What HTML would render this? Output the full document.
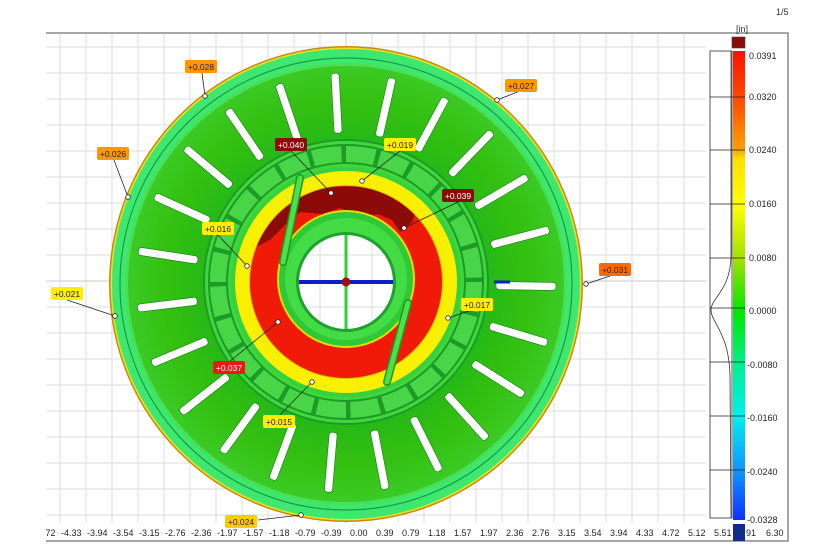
<!DOCTYPE html>
<html><head><meta charset="utf-8"><style>
html,body{margin:0;padding:0;background:#fff;width:828px;height:552px;overflow:hidden}
svg{display:block;font-family:"Liberation Sans",sans-serif}
</style></head><body>
<svg width="828" height="552" viewBox="0 0 828 552" xmlns="http://www.w3.org/2000/svg">
<defs>
<clipPath id="hole"><circle cx="346" cy="282" r="47"/></clipPath>
<clipPath id="redc"><path d="M346,186 a96,96 0 1,1 -0.1,0 Z M346,213 a68,68 0 1,0 0.1,0 Z" clip-rule="evenodd"/></clipPath>
<clipPath id="axl"><rect x="46" y="525" width="742" height="16"/></clipPath>
<linearGradient id="cb" x1="0" y1="0" x2="0" y2="1">
<stop offset="0" stop-color="#ff1000"/><stop offset="0.1" stop-color="#ff4a00"/>
<stop offset="0.21" stop-color="#ffa000"/><stop offset="0.23" stop-color="#ffe000"/>
<stop offset="0.33" stop-color="#ffff00"/><stop offset="0.45" stop-color="#99e000"/>
<stop offset="0.555" stop-color="#00e800"/><stop offset="0.67" stop-color="#00f090"/>
<stop offset="0.78" stop-color="#00f0f0"/><stop offset="0.9" stop-color="#1090ff"/>
<stop offset="1" stop-color="#1030ff"/></linearGradient>
<radialGradient id="spk" cx="346" cy="283" r="222" gradientUnits="userSpaceOnUse">
<stop offset="0.6" stop-color="#22b818"/><stop offset="0.82" stop-color="#34c010"/><stop offset="1" stop-color="#3ccc28"/></radialGradient>
<g id="grid" stroke="#dcdcdc" stroke-width="1">
<path d="M60,33V523M86,33V523M112,33V523M138,33V523M164,33V523M190,33V523M216,33V523M242,33V523M268,33V523M294,33V523M320,33V523M372,33V523M398,33V523M424,33V523M450,33V523M476,33V523M502,33V523M528,33V523M554,33V523M580,33V523M606,33V523M632,33V523M658,33V523M684,33V523"/>
<path d="M46,47H706M46,73H706M46,99H706M46,125H706M46,151H706M46,177H706M46,203H706M46,229H706M46,255H706M46,307H706M46,333H706M46,359H706M46,385H706M46,411H706M46,437H706M46,463H706M46,489H706M46,515H706"/>
<path d="M346,33V523M46,281H706" stroke="#c8c8c8"/>
</g>
</defs>
<use href="#grid"/>
<path d="M46,33H788V541H46" fill="none" stroke="#8a8a8a" stroke-width="1.5"/>
<text x="776" y="15" font-size="9" fill="#333">1/5</text>
<text x="736" y="32" font-size="9" fill="#333">[in]</text>
<!-- outer disc -->
<ellipse cx="346" cy="284" rx="237" ry="238" fill="#c88a10"/>
<ellipse cx="346" cy="284" rx="235.5" ry="236.5" fill="#e8e020"/>
<ellipse cx="346" cy="284" rx="234" ry="235" fill="#3ee870"/>
<circle cx="346" cy="284" r="226" fill="none" stroke="#1a9a40" stroke-width="1.2"/>
<circle cx="346" cy="284" r="221" fill="#48e058"/>
<circle cx="346" cy="284" r="218" fill="url(#spk)"/>
<g transform="translate(346,283)" fill="#fff" stroke="#167a10" stroke-width="0.6">
<rect x="150" y="-4" width="60" height="8" rx="3" transform="rotate(-93)"/>
<rect x="150" y="-4" width="60" height="8" rx="3" transform="rotate(-108.65)"/>
<rect x="150" y="-4" width="60" height="8" rx="3" transform="rotate(-124.3)"/>
<rect x="150" y="-4" width="60" height="8" rx="3" transform="rotate(-139.95)"/>
<rect x="150" y="-4" width="60" height="8" rx="3" transform="rotate(-155.6)"/>
<rect x="150" y="-4" width="60" height="8" rx="3" transform="rotate(-171.25)"/>
<rect x="150" y="-4" width="60" height="8" rx="3" transform="rotate(-186.9)"/>
<rect x="150" y="-4" width="60" height="8" rx="3" transform="rotate(-202.55)"/>
<rect x="150" y="-4" width="60" height="8" rx="3" transform="rotate(-218.2)"/>
<rect x="150" y="-4" width="60" height="8" rx="3" transform="rotate(-233.85)"/>
<rect x="150" y="-4" width="60" height="8" rx="3" transform="rotate(-249.5)"/>
<rect x="150" y="-4" width="60" height="8" rx="3" transform="rotate(-265.15)"/>
<rect x="150" y="-4" width="60" height="8" rx="3" transform="rotate(-280.8)"/>
<rect x="150" y="-4" width="60" height="8" rx="3" transform="rotate(-296.45)"/>
<rect x="150" y="-4" width="60" height="8" rx="3" transform="rotate(-312.1)"/>
<rect x="150" y="-4" width="60" height="8" rx="3" transform="rotate(-327.75)"/>
<rect x="150" y="-4" width="60" height="8" rx="3" transform="rotate(-343.4)"/>
<rect x="150" y="-4" width="60" height="8" rx="3" transform="rotate(-359.05)"/>
<rect x="150" y="-4" width="60" height="8" rx="3" transform="rotate(-14.7)"/>
<rect x="150" y="-4" width="60" height="8" rx="3" transform="rotate(-30.35)"/>
<rect x="150" y="-4" width="60" height="8" rx="3" transform="rotate(-46)"/>
<rect x="150" y="-4" width="60" height="8" rx="3" transform="rotate(-61.65)"/>
<rect x="150" y="-4" width="60" height="8" rx="3" transform="rotate(-77.3)"/>
</g>
<!-- hub -->
<circle cx="346" cy="282" r="143" fill="#1f9a28"/>
<circle cx="346" cy="282" r="141" fill="#3fd83a"/>
<circle cx="346" cy="282" r="128" fill="none" stroke="#1e9a26" stroke-width="20"/>
<circle cx="346" cy="282" r="128" fill="none" stroke="#48d648" stroke-width="16" stroke-dasharray="29 4.5"/>
<circle cx="346" cy="282" r="115" fill="#36d040"/>
<circle cx="346" cy="282" r="111" fill="#f8f000"/>
<circle cx="346" cy="282" r="97" fill="#d8c000"/>
<circle cx="346" cy="282" r="96" fill="#f01a08"/>
<g clip-path="url(#redc)">
<path d="M250,200 L300,187 L380,186 L420,200 L412,222 L400,232 L392,220 L378,214 L360,218 L340,208 L322,214 L300,212 L285,225 L270,240 L250,250 Z" fill="#8c0a08"/>
</g>
<circle cx="346" cy="279" r="69" fill="#e0e000"/>
<circle cx="346" cy="279" r="67" fill="#2ec838"/>
<circle cx="346" cy="279" r="61" fill="#44dc44"/>
<circle cx="346" cy="282" r="50" fill="#1fa030"/>
<circle cx="346" cy="282" r="47" fill="#fff"/>
<g clip-path="url(#hole)"><use href="#grid"/></g>
<path d="M300,178 L283,262 M408,303 L387,382" stroke="#1c9a20" stroke-width="8" stroke-linecap="round"/>
<path d="M300,178 L283,262 M408,303 L387,382" stroke="#4ee04a" stroke-width="5" stroke-linecap="round"/>
<path d="M346,235V329" stroke="#30d030" stroke-width="3"/>
<path d="M299,282H393" stroke="#0a20c8" stroke-width="4"/>
<circle cx="346" cy="282" r="4.5" fill="#a01010"/>
<path d="M494,282H510" stroke="#0a20c8" stroke-width="3"/>
<!-- labels -->
<g stroke="#222" stroke-width="0.8" fill="none">
<path d="M202,73L205,96M520,91L497,100M114,160L128,197M291,151L331,193M400,151L362,181M458,202L404,228M218,235L247,266M610,276L586,284M67,300L115,316M472,310L448,318M229,362L278,322M279,416L312,382M258,520L301,515"/>
</g>
<g fill="#fff" stroke="#222" stroke-width="0.8">
<circle cx="205" cy="96" r="2.3"/><circle cx="497" cy="100" r="2.3"/><circle cx="128" cy="197" r="2.3"/>
<circle cx="331" cy="193" r="2.3"/><circle cx="362" cy="181" r="2.3"/><circle cx="404" cy="228" r="2.3"/>
<circle cx="247" cy="266" r="2.3"/><circle cx="586" cy="284" r="2.3"/><circle cx="115" cy="316" r="2.3"/>
<circle cx="448" cy="318" r="2.3"/><circle cx="278" cy="322" r="2.3"/><circle cx="312" cy="382" r="2.3"/>
<circle cx="301" cy="515" r="2.3"/>
</g>
<g font-size="8.5" text-anchor="middle">
<rect x="185" y="60" width="32" height="13" rx="2" fill="#ff9800"/><text x="201" y="70" fill="#222">+0.028</text>
<rect x="505" y="79" width="32" height="13" rx="2" fill="#ff9800"/><text x="521" y="89" fill="#222">+0.027</text>
<rect x="97" y="147" width="32" height="13" rx="2" fill="#ff9800"/><text x="113" y="157" fill="#222">+0.026</text>
<rect x="275" y="138" width="32" height="13" rx="2" fill="#8c0a08"/><text x="291" y="148" fill="#fff">+0.040</text>
<rect x="384" y="138" width="32" height="13" rx="2" fill="#ffee00"/><text x="400" y="148" fill="#222">+0.019</text>
<rect x="442" y="189" width="32" height="13" rx="2" fill="#8c0a08"/><text x="458" y="199" fill="#fff">+0.039</text>
<rect x="202" y="222" width="32" height="13" rx="2" fill="#ffee00"/><text x="218" y="232" fill="#222">+0.016</text>
<rect x="599" y="263" width="32" height="13" rx="2" fill="#ff6a00"/><text x="615" y="273" fill="#222">+0.031</text>
<rect x="51" y="287" width="32" height="13" rx="2" fill="#ffee00"/><text x="67" y="297" fill="#222">+0.021</text>
<rect x="461" y="298" width="32" height="13" rx="2" fill="#ffee00"/><text x="477" y="308" fill="#222">+0.017</text>
<rect x="213" y="361" width="32" height="13" rx="2" fill="#ee1a10"/><text x="229" y="371" fill="#fff">+0.037</text>
<rect x="263" y="415" width="32" height="13" rx="2" fill="#ffee00"/><text x="279" y="425" fill="#222">+0.015</text>
<rect x="225" y="515" width="32" height="13" rx="2" fill="#ffcc00"/><text x="241" y="525" fill="#222">+0.024</text>
</g>
<!-- colorbar -->
<rect x="710" y="51" width="22" height="467" fill="#fff" stroke="#555" stroke-width="1"/>
<rect x="733" y="51" width="12" height="469" fill="url(#cb)"/>
<rect x="732" y="37" width="13" height="11" fill="#8c0a08" stroke="#444" stroke-width="0.6"/>
<path d="M710,97H745M710,150H745M710,204H745M710,258H745M710,308H745M710,362H745M710,416H745M710,470H745" stroke="#222" stroke-width="0.8"/>
<path d="M731,51 L731,255 C731,290 711,298 711,310 C711,322 729,333 730,375 L731,518" fill="none" stroke="#333" stroke-width="0.8"/>
<g font-size="9" fill="#222">
<text x="749" y="59">0.0391</text><text x="749" y="100">0.0320</text><text x="749" y="153">0.0240</text>
<text x="749" y="207">0.0160</text><text x="749" y="261">0.0080</text><text x="749" y="314">0.0000</text>
<text x="747" y="368">-0.0080</text><text x="747" y="421">-0.0160</text><text x="747" y="475">-0.0240</text>
<text x="747" y="523">-0.0328</text>
</g>
<g font-size="9" fill="#222" clip-path="url(#axl)">
<text x="35" y="536">-4.72</text><text x="61" y="536">-4.33</text><text x="87" y="536">-3.94</text><text x="113" y="536">-3.54</text>
<text x="139" y="536">-3.15</text><text x="165" y="536">-2.76</text><text x="191" y="536">-2.36</text><text x="217" y="536">-1.97</text>
<text x="243" y="536">-1.57</text><text x="269" y="536">-1.18</text><text x="295" y="536">-0.79</text><text x="321" y="536">-0.39</text>
<text x="350" y="536">0.00</text><text x="376" y="536">0.39</text><text x="402" y="536">0.79</text><text x="428" y="536">1.18</text>
<text x="454" y="536">1.57</text><text x="480" y="536">1.97</text><text x="506" y="536">2.36</text><text x="532" y="536">2.76</text>
<text x="558" y="536">3.15</text><text x="584" y="536">3.54</text><text x="610" y="536">3.94</text><text x="636" y="536">4.33</text>
<text x="662" y="536">4.72</text><text x="688" y="536">5.12</text><text x="714" y="536">5.51</text>
<text x="746" y="536">91</text><text x="766" y="536">6.30</text>
</g>
<rect x="733" y="524" width="12" height="17" fill="#142a8a"/>
</svg>
</body></html>
